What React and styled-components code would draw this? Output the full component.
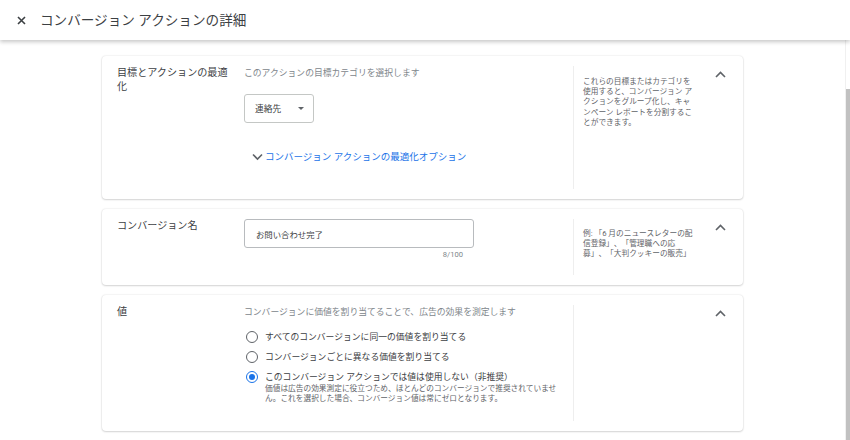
import React from "react";
import styled, { createGlobalStyle } from "styled-components";

const Global = createGlobalStyle`
  html, body { margin: 0; padding: 0; background: #fff; }
  body {
    font-family: Roboto, "Noto Sans CJK JP", "Noto Sans", sans-serif;
    color: #3c4043;
    text-spacing-trim: space-all;
  }
  * { box-sizing: border-box; }
`;

const Page = styled.div`
  width: 850px;
  height: 440px;
  display: flex;
  flex-direction: column;
  overflow: hidden;
  background: #fff;
`;

const Header = styled.header`
  height: 40px;
  flex: none;
  display: flex;
  align-items: center;
  gap: 12px;
  padding-left: 15px;
  background: #fff;
  box-shadow: 0 2px 4px rgba(0, 0, 0, 0.22);
  position: relative;
  z-index: 2;
`;

const CloseBtn = styled.span`
  width: 13px;
  height: 13px;
  display: flex;
  align-items: center;
  justify-content: center;
`;

const HeaderTitle = styled.h1`
  margin: 0;
  font-size: 13.6px;
  font-weight: 400;
  line-height: 20px;
  color: #3c4043;
`;

const BodyRow = styled.div`
  flex: 1;
  display: flex;
  min-height: 0;
`;

const Content = styled.main`
  flex: 1;
  display: flex;
  flex-direction: column;
  align-items: center;
  gap: 10px;
  padding-top: 16px;
  overflow: hidden;
`;

const ScrollTrack = styled.div`
  width: 5px;
  flex: none;
  display: flex;
  flex-direction: column;
  border-left: 1px solid #f0f0f0;
`;

const ScrollThumb = styled.div`
  margin-top: 49px;
  flex: 1;
  background: #c1c1c1;
`;

const Card = styled.section`
  width: 641px;
  flex: none;
  display: flex;
  padding: 10px 0 10px 15px;
  min-height: ${(p) => p.$h}px;
  border-radius: 4px;
  background: #fff;
  box-shadow: 0 0 2px rgba(0, 0, 0, 0.14), 0 1px 2px rgba(0, 0, 0, 0.14);
`;

const CardTitle = styled.div`
  width: 127px;
  flex: none;
  padding: 0 10px 0 0;
  font-size: 10.1px;
  line-height: 14px;
  color: #3c4043;
`;

const CardBody = styled.div`
  width: 329px;
  flex: none;
  padding-right: 8px;
  display: flex;
  flex-direction: column;
  align-items: flex-start;
`;

const Divider = styled.div`
  width: 1px;
  flex: none;
  align-self: stretch;
  background: #eeeeee;
`;

const Help = styled.div`
  width: 123px;
  flex: none;
  padding: ${(p) => p.$pt || 11}px 0 0 9px;
  font-size: 7.7px;
  line-height: 10.2px;
  color: #5f6368;
`;

const ChevronCell = styled.div`
  flex: 1;
  display: flex;
  justify-content: center;
  padding-top: 5px;
  height: 20px;
`;

const Hint = styled.div`
  font-size: 8.8px;
  line-height: 14px;
  color: #80868b;
`;

const Select = styled.div`
  margin-top: 14px;
  width: 70px;
  height: 29px;
  border: 1px solid #c4c7c5;
  border-radius: 3px;
  display: flex;
  align-items: center;
  justify-content: space-between;
  padding: 0 9px 0 10px;
  font-size: 8.7px;
  color: #3c4043;
`;

const Caret = styled.span`
  width: 0;
  height: 0;
  border-left: 3px solid transparent;
  border-right: 3px solid transparent;
  border-top: 3px solid #5f6368;
`;

const LinkRow = styled.div`
  margin-top: 27px;
  margin-left: 8px;
  display: flex;
  align-items: center;
  gap: 2px;
  font-size: 9.5px;
  line-height: 14px;
  color: #1a73e8;
`;

const Input = styled.div`
  width: 230px;
  height: 29px;
  border: 1px solid #b8bbbe;
  border-radius: 3px;
  display: flex;
  align-items: center;
  padding-left: 11px;
  font-size: 8.4px;
  color: #3c4043;
`;

const Counter = styled.div`
  width: 230px;
  text-align: right;
  padding-right: 11px;
  margin-top: 2px;
  font-size: 7.6px;
  line-height: 10px;
  color: #80868b;
`;

const RadioList = styled.div`
  margin-top: 11px;
  display: flex;
  flex-direction: column;
  gap: 6px;
`;

const RadioRow = styled.div`
  display: flex;
  align-items: flex-start;
  gap: 7px;
  padding-left: 2px;
`;

const Radio = styled.span`
  width: 12px;
  height: 12px;
  flex: none;
  margin-top: 1px;
  border-radius: 50%;
  border: 1.5px solid ${(p) => (p.$on ? "#1a73e8" : "#5f6368")};
  display: flex;
  align-items: center;
  justify-content: center;
  &::after {
    content: "";
    width: 6px;
    height: 6px;
    border-radius: 50%;
    background: ${(p) => (p.$on ? "#1a73e8" : "transparent")};
  }
`;

const RadioText = styled.div`
  display: flex;
  flex-direction: column;
`;

const RadioLabel = styled.div`
  font-size: 8.8px;
  line-height: 14px;
  color: #3c4043;
`;

const RadioSub = styled.div`
  width: 300px;
  font-size: 7.7px;
  line-height: 10px;
  color: #5f6368;
`;

const ChevronUp = () => (
  <svg width="11" height="7" viewBox="0 0 11 7">
    <polyline points="1,6 5.5,1.5 10,6" fill="none" stroke="#5f6368" strokeWidth="1.6" />
  </svg>
);

const ChevronDown = () => (
  <svg width="11" height="8" viewBox="0 0 11 8">
    <polyline points="1,1.5 5.5,6 10,1.5" fill="none" stroke="#5f6368" strokeWidth="1.6" />
  </svg>
);

export default function App() {
  return (
    <>
      <Global />
      <Page>
        <Header>
          <CloseBtn>
            <svg width="9" height="9" viewBox="0 0 9 9">
              <path d="M1 1L8 8M8 1L1 8" stroke="#3c4043" strokeWidth="1.6" />
            </svg>
          </CloseBtn>
          <HeaderTitle>コンバージョン アクションの詳細</HeaderTitle>
        </Header>
        <BodyRow>
          <Content>
            <Card $h={143}>
              <CardTitle>目標とアクションの最適化</CardTitle>
              <CardBody>
                <Hint>このアクションの目標カテゴリを選択します</Hint>
                <Select>
                  <span>連絡先</span>
                  <Caret />
                </Select>
                <LinkRow>
                  <ChevronDown />
                  <span>コンバージョン アクションの最適化オプション</span>
                </LinkRow>
              </CardBody>
              <Divider />
              <Help>
                これらの目標またはカテゴリを使用すると、コンバージョン アクションをグループ化し、キャンペーン レポートを分割することができます。
              </Help>
              <ChevronCell>
                <ChevronUp />
              </ChevronCell>
            </Card>
            <Card $h={76}>
              <CardTitle>コンバージョン名</CardTitle>
              <CardBody>
                <Input>お問い合わせ完了</Input>
                <Counter>8/100</Counter>
              </CardBody>
              <Divider />
              <Help $pt={10}>
                例: 「6 月のニュースレターの配信登録」、「管理職への応募」、「大判クッキーの販売」
              </Help>
              <ChevronCell>
                <ChevronUp />
              </ChevronCell>
            </Card>
            <Card $h={136}>
              <CardTitle>値</CardTitle>
              <CardBody>
                <Hint>コンバージョンに価値を割り当てることで、広告の効果を測定します</Hint>
                <RadioList>
                  <RadioRow>
                    <Radio />
                    <RadioText>
                      <RadioLabel>すべてのコンバージョンに同一の価値を割り当てる</RadioLabel>
                    </RadioText>
                  </RadioRow>
                  <RadioRow>
                    <Radio />
                    <RadioText>
                      <RadioLabel>コンバージョンごとに異なる価値を割り当てる</RadioLabel>
                    </RadioText>
                  </RadioRow>
                  <RadioRow>
                    <Radio $on />
                    <RadioText>
                      <RadioLabel>このコンバージョン アクションでは値は使用しない（非推奨）</RadioLabel>
                      <RadioSub>
                        価値は広告の効果測定に役立つため、ほとんどのコンバージョンで推奨されていません。これを選択した場合、コンバージョン値は常にゼロとなります。
                      </RadioSub>
                    </RadioText>
                  </RadioRow>
                </RadioList>
              </CardBody>
              <Divider />
              <Help />
              <ChevronCell>
                <ChevronUp />
              </ChevronCell>
            </Card>
          </Content>
          <ScrollTrack>
            <ScrollThumb />
          </ScrollTrack>
        </BodyRow>
      </Page>
    </>
  );
}
